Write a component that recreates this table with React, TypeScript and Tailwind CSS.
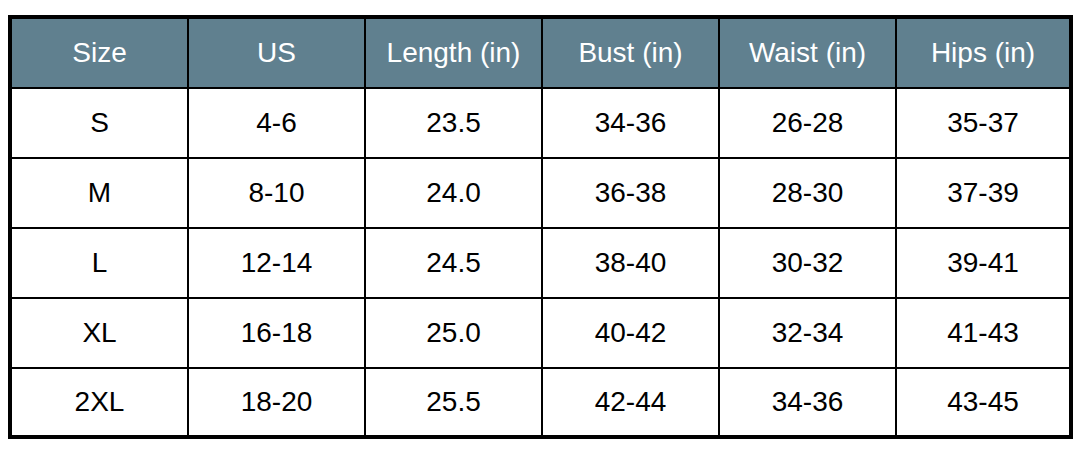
import React from "react";

const headers = ["Size", "US", "Length (in)", "Bust (in)", "Waist (in)", "Hips (in)"];
const rows = [
  ["S", "4-6", "23.5", "34-36", "26-28", "35-37"],
  ["M", "8-10", "24.0", "36-38", "28-30", "37-39"],
  ["L", "12-14", "24.5", "38-40", "30-32", "39-41"],
  ["XL", "16-18", "25.0", "40-42", "32-34", "41-43"],
  ["2XL", "18-20", "25.5", "42-44", "34-36", "43-45"],
];

export default function App() {
  return (
    <div className="w-[1083px] h-[456px] bg-white pt-[15px] pl-[8px]" style={{ fontFamily: '"Liberation Sans", Arial, sans-serif' }}>
      <div className="w-[1065px] border-[4px] border-black bg-black grid grid-cols-[175px_175px_175px_175px_175px_172px] gap-[2px] grid-rows-[68px_68px_68px_68px_68px_66px]">
        {headers.map((h) => (
          <div key={h} className="bg-[#60808f] text-white flex items-center justify-center text-[28px]">
            {h}
          </div>
        ))}
        {rows.map((r, i) =>
          r.map((c, j) => (
            <div key={i + "-" + j} className="bg-white text-black flex items-center justify-center text-[28px]">
              {c}
            </div>
          ))
        )}
      </div>
    </div>
  );
}
